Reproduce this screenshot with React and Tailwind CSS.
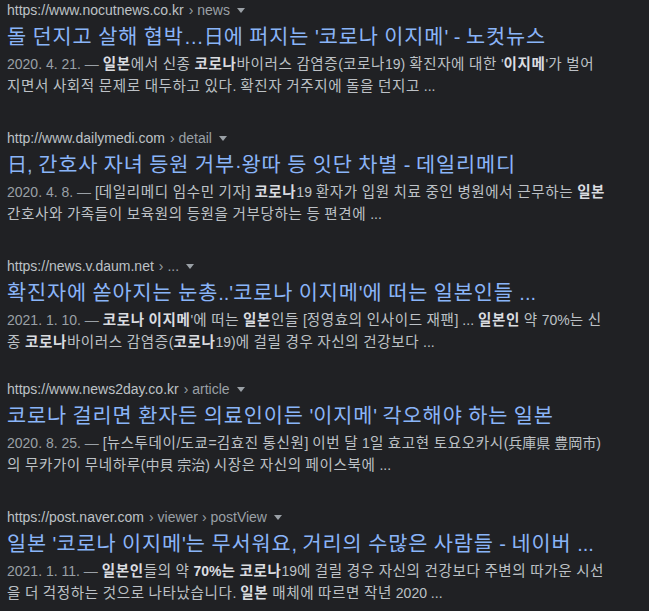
import React from "react";

// Search results (dark theme)
const results = [
    {
        host: "https://www.nocutnews.co.kr",
        path: "news",
        title: "돌 던지고 살해 협박…日에 퍼지는 '코로나 이지메' - 노컷뉴스",
        date: "2020. 4. 21.",
        snippet: [
            { b: "일본" }, "에서 신종 ", { b: "코로나" }, "바이러스 감염증(코로나19) 확진자에 대한 '", { b: "이지메" }, "'가 벌어",
            { br: true },
            "지면서 사회적 문제로 대두하고 있다. 확진자 거주지에 돌을 던지고 ...",
        ],
    },
    {
        host: "http://www.dailymedi.com",
        path: "detail",
        title: "日, 간호사 자녀 등원 거부·왕따 등 잇단 차별 - 데일리메디",
        date: "2020. 4. 8.",
        snippet: [
            "[데일리메디 임수민 기자] ", { b: "코로나" }, "19 환자가 입원 치료 중인 병원에서 근무하는 ", { b: "일본" },
            { br: true },
            "간호사와 가족들이 보육원의 등원을 거부당하는 등 편견에 ...",
        ],
    },
    {
        host: "https://news.v.daum.net",
        path: "...",
        title: "확진자에 쏟아지는 눈총..'코로나 이지메'에 떠는 일본인들 ...",
        date: "2021. 1. 10.",
        short: true,
        snippet: [
            { b: "코로나 이지메" }, "'에 떠는 ", { b: "일본" }, "인들 [정영효의 인사이드 재팬] ... ", { b: "일본인" }, " 약 70%는 신",
            { br: true },
            "종 ", { b: "코로나" }, "바이러스 감염증(", { b: "코로나" }, "19)에 걸릴 경우 자신의 건강보다 ...",
        ],
    },
    {
        host: "https://www.news2day.co.kr",
        path: "article",
        title: "코로나 걸리면 환자든 의료인이든 '이지메' 각오해야 하는 일본",
        date: "2020. 8. 25.",
        snippet: [
            "[뉴스투데이/도쿄=김효진 통신원] 이번 달 1일 효고현 토요오카시(兵庫県 豊岡市)",
            { br: true },
            "의 무카가이 무네하루(中貝 宗治) 시장은 자신의 페이스북에 ...",
        ],
    },
    {
        host: "https://post.naver.com",
        path: "viewer › postView",
        title: "일본 '코로나 이지메'는 무서워요, 거리의 수많은 사람들 - 네이버 ...",
        date: "2021. 1. 11.",
        snippet: [
            { b: "일본인" }, "들의 약 ", { b: "70%는 코로나" }, "19에 걸릴 경우 자신의 건강보다 주변의 따가운 시선",
            { br: true },
            "을 더 걱정하는 것으로 나타났습니다. ", { b: "일본" }, " 매체에 따르면 작년 2020 ...",
        ],
    },
];

// Hangul runs get a touch more width so the lines run as long as the original font
function Ko({ text }) {
    const parts = text.split(/([\uAC00-\uD7A3]+)/);
    return parts.map((s, i) =>
        i % 2 === 1 ? (
            <span key={i} className="text-[1.04em] tracking-[0.042em]">
                {s}
            </span>
        ) : (
            <React.Fragment key={i}>{s}</React.Fragment>
        )
    );
}

function Snippet({ parts }) {
    return parts.map((p, i) => {
        if (typeof p === "string") return <Ko key={i} text={p} />;
        if (p.br) return <br key={i} />;
        return (
            <span key={i} className="font-bold text-[#dadce0]">
                <Ko text={p.b} />
            </span>
        );
    });
}

export default function App() {
    return (
        <div
            className="min-h-screen w-full bg-[#202124] pl-[7px]"
            style={{ fontFamily: '"Liberation Sans", Arial, "Noto Sans CJK KR", sans-serif' }}
        >
            {results.map((r) => (
                <div key={r.host} className={r.short ? "mb-[26px]" : "mb-[31px]"}>
                    {/* URL / breadcrumb */}
                    <div className="flex items-center h-5 text-[14px] leading-5 whitespace-nowrap">
                        <span className="text-[#bdc1c6]">{r.host}</span>
                        <span className="text-[#9aa0a6] ml-[5px]">› {r.path}</span>
                        <svg className="ml-[7px] mt-[1px]" width="8" height="5" viewBox="0 0 8 5">
                            <path d="M0 0h8L4 5z" fill="#9aa0a6" />
                        </svg>
                    </div>

                    {/* Title */}
                    <div className="mt-1 text-[20px] leading-[26px] text-[#8ab4f8] whitespace-nowrap">
                        <Ko text={r.title} />
                    </div>

                    {/* Snippet */}
                    <div className="mt-[3px] text-[14px] leading-[22px] text-[#bdc1c6] whitespace-nowrap">
                        <span className="text-[#9aa0a6]">{r.date} — </span>
                        <Snippet parts={r.snippet} />
                    </div>
                </div>
            ))}
        </div>
    );
}
